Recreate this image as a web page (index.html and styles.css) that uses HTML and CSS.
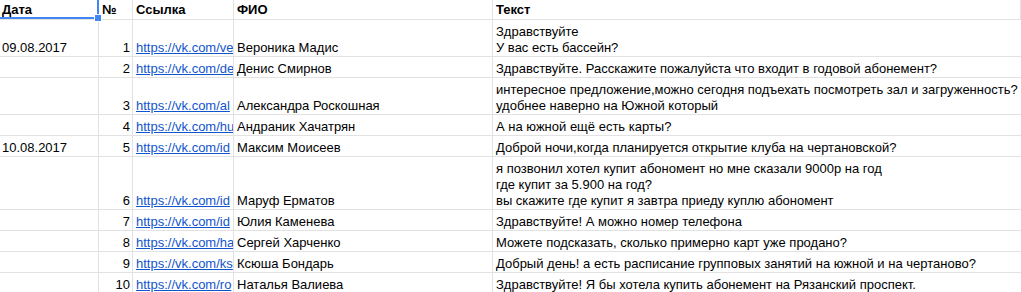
FILE: index.html
```html
<!DOCTYPE html>
<html lang="ru">
<head>
<meta charset="utf-8">
<title>Таблица</title>
<link rel="stylesheet" href="styles.css">
</head>
<body>
<div class="sheet">
  <div class="c h sel">Дата<span class="selbox"></span><span class="handle"></span></div>
  <div class="c h">№</div>
  <div class="c h">Ссылка</div>
  <div class="c h">ФИО</div>
  <div class="c h">Текст</div>

  <div class="c">09.08.2017</div>
  <div class="c n">1</div>
  <div class="c"><a href="#">https://vk.com/ve</a></div>
  <div class="c">Вероника Мадис</div>
  <div class="c t">Здравствуйте<br>У вас есть бассейн?</div>

  <div class="c"></div>
  <div class="c n">2</div>
  <div class="c"><a href="#">https://vk.com/de</a></div>
  <div class="c">Денис Смирнов</div>
  <div class="c t">Здравствуйте. Расскажите пожалуйста что входит в годовой абонемент?</div>

  <div class="c"></div>
  <div class="c n">3</div>
  <div class="c"><a href="#">https://vk.com/al</a></div>
  <div class="c">Александра Роскошная</div>
  <div class="c t">интересное предложение,можно сегодня подъехать посмотреть зал и загруженность?<br>удобнее наверно на Южной который</div>

  <div class="c"></div>
  <div class="c n">4</div>
  <div class="c"><a href="#">https://vk.com/hu</a></div>
  <div class="c">Андраник Хачатрян</div>
  <div class="c t">А на южной ещё есть карты?</div>

  <div class="c">10.08.2017</div>
  <div class="c n">5</div>
  <div class="c"><a href="#">https://vk.com/id</a></div>
  <div class="c">Максим Моисеев</div>
  <div class="c t">Доброй ночи,когда планируется открытие клуба на чертановской?</div>

  <div class="c"></div>
  <div class="c n">6</div>
  <div class="c"><a href="#">https://vk.com/id</a></div>
  <div class="c">Маруф Ерматов</div>
  <div class="c t">я позвонил хотел купит абономент но мне сказали 9000р на год<br>где купит за 5.900 на год?<br>вы скажите где купит я завтра приеду куплю абономент</div>

  <div class="c"></div>
  <div class="c n">7</div>
  <div class="c"><a href="#">https://vk.com/id</a></div>
  <div class="c">Юлия Каменева</div>
  <div class="c t">Здравствуйте! А можно номер телефона</div>

  <div class="c"></div>
  <div class="c n">8</div>
  <div class="c"><a href="#">https://vk.com/ha</a></div>
  <div class="c">Сергей Харченко</div>
  <div class="c t">Можете подсказать, сколько примерно карт уже продано?</div>

  <div class="c"></div>
  <div class="c n">9</div>
  <div class="c"><a href="#">https://vk.com/ks</a></div>
  <div class="c">Ксюша Бондарь</div>
  <div class="c t">Добрый день! а есть расписание групповых занятий на южной и на чертаново?</div>

  <div class="c"></div>
  <div class="c n">10</div>
  <div class="c"><a href="#">https://vk.com/ro</a></div>
  <div class="c">Наталья Валиева</div>
  <div class="c t">Здравствуйте! Я бы хотела купить абонемент на Рязанский проспект.</div>
</div>
</body>
</html>
```

FILE: styles.css
```css
html, body {
  margin: 0;
  padding: 0;
  background: #ffffff;
}

body {
  font-family: "Liberation Sans", Arial, sans-serif;
  font-size: 13px;
  color: #000000;
  overflow: hidden;
}

.sheet {
  display: grid;
  grid-template-columns: 99px 34px 101px 259px 1fr;
  grid-template-rows: 20px 37px 21px 37px 21px 21px 53px 21px 21px 21px 21px;
  width: 1021px;
}

.c {
  box-sizing: border-box;
  border-right: 1px solid #e2e2e2;
  border-bottom: 1px solid #e2e2e2;
  display: flex;
  align-items: flex-end;
  padding: 0 3px 0 3px;
  line-height: 16px;
  white-space: nowrap;
  overflow: hidden;
  min-width: 0;
}

.c:nth-child(5n+1) {
  padding-left: 2px;
}

.h {
  font-weight: bold;
  padding-bottom: 1px;
}

.n {
  justify-content: flex-end;
  padding-right: 2px;
}

.t {
  flex-direction: column;
  justify-content: flex-end;
  align-items: flex-start;
  overflow: visible;
  border-right: none;
}

.c a {
  color: #1155cc;
  text-decoration: underline;
}

.sel {
  position: relative;
  overflow: visible;
}

.selbox {
  position: absolute;
  left: 0;
  top: 0;
  width: 99px;
  height: 19px;
  box-sizing: border-box;
  border-right: 2px solid #4285f4;
  border-bottom: 2px solid #4285f4;
}

.handle {
  position: absolute;
  left: 94px;
  top: 14px;
  width: 6px;
  height: 6px;
  background: #4285f4;
  border: 1px solid #ffffff;
  z-index: 2;
}
```
